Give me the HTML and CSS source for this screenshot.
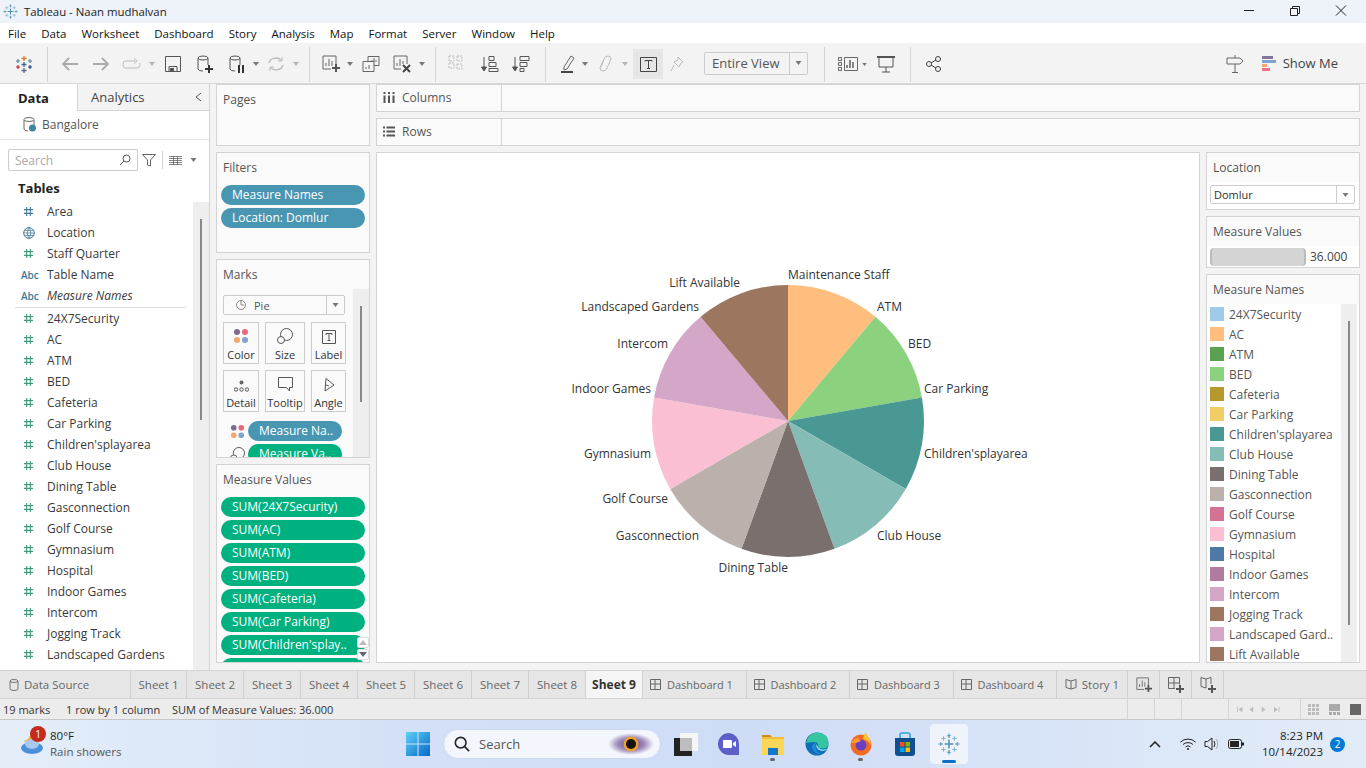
FILE: index.html
```html
<!DOCTYPE html>
<html lang="en">
<head>
<meta charset="utf-8">
<title>Tableau - Naan mudhalvan</title>
<link rel="stylesheet" href="styles.css">
</head>
<body>
<svg class="defs" width="0" height="0" aria-hidden="true">
  <symbol id="hash" viewBox="0 0 12 12"><path d="M4 1v10M8 1v10M1 4h10M1 8h10" fill="none" stroke="currentColor" stroke-width="1.2"/></symbol>
  <symbol id="caret" viewBox="0 0 6 4"><path d="M0 0h6L3 4z" fill="#777"/></symbol>
  <symbol id="sheetadd" viewBox="0 0 18 18"><path d="M1 1h13v8M9 14H1V1" fill="none" stroke="#666"/><path d="M4 11V8M7 11V4M10 11V6" stroke="#666"/><path d="M14 9v8M10 13h8" stroke="#555" stroke-width="2"/></symbol>
  <symbol id="snow" viewBox="0 0 20 20"><path d="M10 6v8M6 10h8" stroke="#4d93b8" stroke-width="1.400"/><path d="M10 .5v4M8.300 2.500h3.400M10 15.500v4M8.300 17.500h3.400M.5 10h4M2.500 8.300v3.400M15.500 10h4M17.500 8.300v3.400" stroke="#4d93b8"/><path d="M5 3v4M3 5h4M15 3v4M13 5h4M5 13v4M3 15h4M15 13v4M13 15h4" stroke="#8ab6cf"/></symbol>
</svg>
<div class="app">
  <header class="titlebar">
    <svg class="applogo" width="15" height="15"><use href="#snow"/></svg>
    <span class="apptitle">Tableau - Naan mudhalvan</span>
    <div class="winctl">
      <svg width="46" height="23" viewBox="0 0 46 23"><path d="M18 10.500h10" stroke="#222"/></svg>
      <svg width="46" height="23" viewBox="0 0 46 23"><path d="M18.500 8.500h7v7h-7zM20.500 8V6.500h7v7H26" fill="none" stroke="#222"/></svg>
      <svg width="46" height="23" viewBox="0 0 46 23"><path d="M18 5.500l10 10M28 5.500l-10 10" stroke="#222"/></svg>
    </div>
  </header>
  <nav class="menubar">
    <span>File</span><span>Data</span><span>Worksheet</span><span>Dashboard</span><span>Story</span><span>Analysis</span><span>Map</span><span>Format</span><span>Server</span><span>Window</span><span>Help</span>
  </nav>
  <div class="toolbar">
    <div class="tb w47"><svg width="20" height="20" viewBox="0 0 20 20"><path d="M10 2v5M7.500 4.500h5" stroke="#e8762b" stroke-width="1.300"/><path d="M4 5v4M2 7h4M16 5v4M14 7h4" stroke="#5b879b" stroke-width="1.200"/><path d="M10 8v5M7.500 10.500h5" stroke="#3b6e8f" stroke-width="1.300"/><path d="M4 11v4M2 13h4" stroke="#c72037" stroke-width="1.200"/><path d="M16 11v4M14 13h4" stroke="#1f457a" stroke-width="1.200"/><path d="M10 14v5M7.500 16.500h5" stroke="#5c6692" stroke-width="1.300"/></svg></div>
    <i class="sep"></i>
    <div class="tb w30 ml7"><svg width="18" height="16" viewBox="0 0 18 16"><path d="M17 8H2M8 2L2 8l6 6" fill="none" stroke="#aaa" stroke-width="1.800"/></svg></div>
    <div class="tb w32"><svg width="18" height="16" viewBox="0 0 18 16"><path d="M1 8h15M10 2l6 6-6 6" fill="none" stroke="#aaa" stroke-width="1.800"/></svg></div>
    <div class="tb w30"><svg width="20" height="12" viewBox="0 0 20 12"><path d="M13 3H3Q1 3 1 6.500T3 10h12q3 0 3-3.500V5M12 .5L15 3l-3 2.500" fill="none" stroke="#bbb"/></svg></div>
    <div class="tb w10"><svg width="6" height="4"><use href="#caret" opacity=".5"/></svg></div>
    <div class="tb w32"><svg width="16" height="16" viewBox="0 0 16 16"><path d="M.5.500h15v15H.5zM4 15.500v-5h8v5" fill="none" stroke="#555"/><path d="M5 12h4v3H5z" fill="#555"/></svg></div>
    <div class="tb w32"><svg width="18" height="18" viewBox="0 0 18 18"><ellipse cx="7" cy="3" rx="5" ry="2" fill="none" stroke="#555"/><path d="M2 3v11q0 2 5 2M12 3v7" fill="none" stroke="#555"/><path d="M13 10v8M9 14h8" stroke="#333" stroke-width="2"/></svg></div>
    <div class="tb w32"><svg width="18" height="18" viewBox="0 0 18 18"><ellipse cx="7" cy="3" rx="5" ry="2" fill="none" stroke="#555"/><path d="M2 3v11q0 2 5 2M12 3v7" fill="none" stroke="#555"/><path d="M10 10h2v8h-2zM14 10h2v8h-2z" fill="#333"/></svg></div>
    <div class="tb w6"><svg width="6" height="4"><use href="#caret"/></svg></div>
    <div class="tb w34"><svg width="18" height="16" viewBox="0 0 18 16"><path d="M2 7a7 6 0 0 1 12-3M16 9a7 6 0 0 1-12 3" fill="none" stroke="#bbb" stroke-width="1.400"/><path d="M15 1v4h-4M3 15v-4h4" fill="none" stroke="#bbb"/></svg></div>
    <div class="tb w6"><svg width="6" height="4"><use href="#caret" opacity=".5"/></svg></div>
    <i class="sep ml10"></i>
    <div class="tb w30 ml6"><svg width="18" height="18"><use href="#sheetadd"/></svg></div>
    <div class="tb w8"><svg width="6" height="4"><use href="#caret"/></svg></div>
    <div class="tb w34"><svg width="18" height="16" viewBox="0 0 18 16"><path d="M6 5V.5h11v9h-5M1 5.500h11v10H1z" fill="#f3f3f3" stroke="#666"/><path d="M10 5V4M12 6V2M14 6V4M4 13v-2M7 13V9" stroke="#666"/></svg></div>
    <div class="tb w28"><svg width="18" height="18" viewBox="0 0 18 18"><path d="M1 1h13v8M8 14H1V1" fill="none" stroke="#666"/><path d="M4 11V8M7 11V4M10 9V6" stroke="#666"/><path d="M10 10l7 7M17 10l-7 7" stroke="#444" stroke-width="2"/></svg></div>
    <div class="tb w12"><svg width="6" height="4"><use href="#caret"/></svg></div>
    <i class="sep ml7"></i>
    <div class="tb w42"><svg width="18" height="18" viewBox="0 0 18 18"><path d="M1 1h5v5H1zM1 8h5v5H1zM9 1h5v5H9zM9 9h5v5H9z" fill="none" stroke="#bbb" stroke-dasharray="2 1"/></svg></div>
    <div class="tb w24"><svg width="18" height="16" viewBox="0 0 18 16"><path d="M3 1v13M.5 11L3 15l2.500-4z" fill="#555" stroke="#555"/><path d="M8 .5h5v4H8zM8 6.500h7v4H8zM8 12.500h9v3H8z" fill="none" stroke="#555"/></svg></div>
    <div class="tb w38"><svg width="18" height="16" viewBox="0 0 18 16"><path d="M3 1v13M.5 11L3 15l2.500-4z" fill="#555" stroke="#555"/><path d="M8 .5h9v4H8zM8 6.500h7v4H8zM8 12.500h4v3H8z" fill="none" stroke="#555"/></svg></div>
    <i class="sep ml5"></i>
    <div class="tb w28 ml8"><svg width="14" height="18" viewBox="0 0 14 18"><path d="M3 12L10 1l3 2-7 11-3 1z" fill="none" stroke="#666"/><path d="M0 17h12" stroke="#444" stroke-width="2"/></svg></div>
    <div class="tb w6"><svg width="6" height="4"><use href="#caret"/></svg></div>
    <div class="tb w34"><svg width="14" height="18" viewBox="0 0 14 18"><path d="M5 6l-3 7q0 3 3 3t4-3l4-9q0-3-3-3T6 4l-3 8" fill="none" stroke="#bbb"/></svg></div>
    <div class="tb w6"><svg width="6" height="4"><use href="#caret" opacity=".5"/></svg></div>
    <div class="tb w30 ml5 tb-on"><svg width="17" height="15" viewBox="0 0 17 15"><path d="M.5.500h16v14H.5z" fill="none" stroke="#444"/><path d="M5 4.500V3.500h7v1M8.500 3.500v8M7 11.500h3" fill="none" stroke="#444"/></svg></div>
    <div class="tb w28"><svg width="14" height="16" viewBox="0 0 14 16"><path d="M8 1l5 5-2 1-2 4-5-5 4-2zM4 9l-3 6" fill="none" stroke="#bbb"/></svg></div>
    <div class="viewsel"><span class="viewtext">Entire View</span><span class="viewcaret"><svg width="7" height="4"><use href="#caret"/></svg></span></div>
    <i class="sep ml16"></i>
    <div class="tb w28 ml9"><svg width="20" height="14" viewBox="0 0 20 14"><path d="M.5.500h3v3h-3zM.5 5.500h3v3h-3zM.5 10.500h3v3h-3zM6.500.5h13v13h-13z" fill="none" stroke="#666"/><path d="M9 11V8M12 11V3M15 11V5" stroke="#555" stroke-width="1.400"/></svg></div>
    <div class="tb w4"><svg width="5" height="3"><use href="#caret"/></svg></div>
    <div class="tb w40"><svg width="18" height="17" viewBox="0 0 18 17"><path d="M0 1h18" stroke="#555" stroke-width="2"/><path d="M2 1v10h14V1M9 11v5M5 16h8" fill="none" stroke="#555"/></svg></div>
    <i class="sep ml4"></i>
    <div class="tb w44"><svg width="15" height="16" viewBox="0 0 15 16"><circle cx="3" cy="8" r="2.500" fill="none" stroke="#444"/><circle cx="12" cy="3" r="2.500" fill="none" stroke="#444"/><circle cx="12" cy="13" r="2.500" fill="none" stroke="#444"/><path d="M5 7l5-3M5 9l5 3" stroke="#444"/></svg></div>
    <div class="tb w30 push"><svg width="18" height="18" viewBox="0 0 18 18"><path d="M9 0v3M1 3h13l3 3-3 3H1zM9 9v8M6 17.500h6" fill="none" stroke="#666"/></svg></div>
    <div class="showme"><svg width="15" height="16" viewBox="0 0 15 16"><path d="M0 1h11v3H0z" fill="#86749c"/><path d="M0 5h14v3H0z" fill="#7fa3cc"/><path d="M0 9h5v3H0z" fill="#f3a66e"/><path d="M0 13h8v3H0z" fill="#f2707d"/></svg><span>Show Me</span></div>
  </div>
  <main class="main">
    <aside class="datapane">
      <div class="panetabs"><span class="ptab active">Data</span><span class="ptab">Analytics</span><span class="collapse"><svg width="7" height="10" viewBox="0 0 7 10"><path d="M6 1L1 5l5 4" fill="none" stroke="#555"/></svg></span></div>
      <div class="source"><svg width="13" height="15" viewBox="0 0 13 15"><ellipse cx="6" cy="2.500" rx="5" ry="2" fill="none" stroke="#666"/><path d="M1 3v9q0 2 4 2M11 3v5" fill="none" stroke="#666"/><circle cx="9.500" cy="11" r="3.500" fill="#3f84a8"/></svg><span>Bangalore</span></div>
      <div class="searchrow">
        <div class="search"><span>Search</span><svg width="12" height="12" viewBox="0 0 12 12"><circle cx="7.500" cy="4.500" r="3.500" fill="none" stroke="#555"/><path d="M5 7l-4 4" stroke="#555"/></svg></div>
        <svg class="filt" width="14" height="13" viewBox="0 0 14 13"><path d="M.5.500h13L8.500 6v6l-3-1V6z" fill="none" stroke="#666"/></svg>
        <i class="vr"></i>
        <svg width="13" height="9" viewBox="0 0 13 9"><path d="M0 .5h13M0 2.500h13M0 4.500h13M0 6.500h13M0 8.500h13M4.500 0v9M8.500 0v9" fill="none" stroke="#666" stroke-width=".8"/></svg>
        <svg class="cr" width="7" height="4"><use href="#caret"/></svg>
      </div>
      <div class="tables">Tables</div>
      <div class="fieldwrap">
        <div class="fields">
          <div class="field blue"><svg class="ic" width="11" height="11"><use href="#hash"/></svg><span>Area</span></div>
          <div class="field blue"><svg class="ic globe" width="12" height="12" viewBox="0 0 12 12"><circle cx="6" cy="6" r="5.300" fill="none" stroke="currentColor"/><path d="M.7 6h10.600M1.500 3.500h9M1.500 8.500h9M6 .7Q2.500 6 6 11.300Q9.500 6 6 .7" fill="none" stroke="currentColor" stroke-width=".7"/></svg><span>Location</span></div>
          <div class="field green"><svg class="ic" width="11" height="11"><use href="#hash"/></svg><span>Staff Quarter</span></div>
          <div class="field blue"><b class="abc">Abc</b><span>Table Name</span></div>
          <div class="field blue ital"><b class="abc">Abc</b><span>Measure Names</span></div>
          <div class="divider"></div>
          <div class="field green"><svg class="ic" width="11" height="11"><use href="#hash"/></svg><span>24X7Security</span></div>
          <div class="field green"><svg class="ic" width="11" height="11"><use href="#hash"/></svg><span>AC</span></div>
          <div class="field green"><svg class="ic" width="11" height="11"><use href="#hash"/></svg><span>ATM</span></div>
          <div class="field green"><svg class="ic" width="11" height="11"><use href="#hash"/></svg><span>BED</span></div>
          <div class="field green"><svg class="ic" width="11" height="11"><use href="#hash"/></svg><span>Cafeteria</span></div>
          <div class="field green"><svg class="ic" width="11" height="11"><use href="#hash"/></svg><span>Car Parking</span></div>
          <div class="field green"><svg class="ic" width="11" height="11"><use href="#hash"/></svg><span>Children'splayarea</span></div>
          <div class="field green"><svg class="ic" width="11" height="11"><use href="#hash"/></svg><span>Club House</span></div>
          <div class="field green"><svg class="ic" width="11" height="11"><use href="#hash"/></svg><span>Dining Table</span></div>
          <div class="field green"><svg class="ic" width="11" height="11"><use href="#hash"/></svg><span>Gasconnection</span></div>
          <div class="field green"><svg class="ic" width="11" height="11"><use href="#hash"/></svg><span>Golf Course</span></div>
          <div class="field green"><svg class="ic" width="11" height="11"><use href="#hash"/></svg><span>Gymnasium</span></div>
          <div class="field green"><svg class="ic" width="11" height="11"><use href="#hash"/></svg><span>Hospital</span></div>
          <div class="field green"><svg class="ic" width="11" height="11"><use href="#hash"/></svg><span>Indoor Games</span></div>
          <div class="field green"><svg class="ic" width="11" height="11"><use href="#hash"/></svg><span>Intercom</span></div>
          <div class="field green"><svg class="ic" width="11" height="11"><use href="#hash"/></svg><span>Jogging Track</span></div>
          <div class="field green"><svg class="ic" width="11" height="11"><use href="#hash"/></svg><span>Landscaped Gardens</span></div>
        </div>
        <div class="vscroll fieldscroll"><i></i></div>
      </div>
    </aside>
    <section class="cards">
      <div class="card pages"><div class="cardtitle">Pages</div></div>
      <div class="card filters"><div class="cardtitle">Filters</div>
        <div class="pills"><div class="pill teal">Measure Names</div><div class="pill teal">Location: Domlur</div></div>
      </div>
      <div class="card marks"><div class="cardtitle">Marks</div>
        <div class="marksbody">
          <div class="marktype"><span class="mt-label"><svg width="10" height="10" viewBox="0 0 10 10"><circle cx="5" cy="5" r="4.500" fill="none" stroke="#888"/><path d="M5 1v4h3" fill="none" stroke="#888"/></svg>Pie</span><span class="mt-caret"><svg width="7" height="4"><use href="#caret"/></svg></span></div>
          <div class="markgrid">
            <div class="mbtn"><svg width="16" height="16" viewBox="0 0 16 16"><circle cx="4" cy="4" r="3" fill="#7d6b8f"/><circle cx="12" cy="4" r="3" fill="#e8697d"/><circle cx="4" cy="12" r="3" fill="#f3a66e"/><circle cx="12" cy="12" r="3" fill="#7fa3cc"/></svg><span>Color</span></div>
            <div class="mbtn"><svg width="16" height="16" viewBox="0 0 16 16"><circle cx="9.500" cy="6.500" r="6" fill="none" stroke="#555"/><circle cx="4" cy="12" r="3.500" fill="#fafafa" stroke="#555"/></svg><span>Size</span></div>
            <div class="mbtn"><svg width="14" height="14" viewBox="0 0 14 14"><path d="M.5.500h13v13H.5z" fill="none" stroke="#555"/><path d="M4 5V3.500h6V5M7 3.500v7M5.500 10.500h3" fill="none" stroke="#555"/></svg><span>Label</span></div>
            <div class="mbtn"><svg width="15" height="12" viewBox="0 0 15 12"><circle cx="7.500" cy="2.500" r="2" fill="#666"/><circle cx="2" cy="9.500" r="1.700" fill="none" stroke="#555"/><circle cx="7.500" cy="9.500" r="1.700" fill="none" stroke="#555"/><circle cx="13" cy="9.500" r="1.700" fill="none" stroke="#555"/></svg><span>Detail</span></div>
            <div class="mbtn"><svg width="15" height="15" viewBox="0 0 15 15"><path d="M.5.500h14v10h-3v3.500l-3-3.500H.5z" fill="none" stroke="#555"/></svg><span>Tooltip</span></div>
            <div class="mbtn"><svg width="12" height="14" viewBox="0 0 12 14"><path d="M3 .5L11 7l-9 6zM3 7l3 1" fill="none" stroke="#555"/></svg><span>Angle</span></div>
          </div>
          <div class="markpill"><svg width="15" height="15" viewBox="0 0 16 16"><circle cx="4" cy="4" r="3" fill="#7d6b8f"/><circle cx="12" cy="4" r="3" fill="#e8697d"/><circle cx="4" cy="12" r="3" fill="#f3a66e"/><circle cx="12" cy="12" r="3" fill="#7fa3cc"/></svg><div class="pill teal">Measure Na..</div></div>
          <div class="markpill"><svg width="15" height="15" viewBox="0 0 16 16"><circle cx="9.500" cy="6.500" r="6" fill="none" stroke="#555"/><circle cx="4" cy="12" r="3.500" fill="#fafafa" stroke="#555"/></svg><div class="pill mint">Measure Va..</div></div>
        </div>
        <div class="vscroll markscroll"><i></i></div>
      </div>
      <div class="card mvalues"><div class="cardtitle">Measure Values</div>
        <div class="pills tight">
          <div class="pill mint">SUM(24X7Security)</div>
          <div class="pill mint">SUM(AC)</div>
          <div class="pill mint">SUM(ATM)</div>
          <div class="pill mint">SUM(BED)</div>
          <div class="pill mint">SUM(Cafeteria)</div>
          <div class="pill mint">SUM(Car Parking)</div>
          <div class="pill mint">SUM(Children'splay..</div>
          <div class="pill mint"></div>
        </div>
        <div class="spin"><span><svg width="8" height="5" viewBox="0 0 8 5"><path d="M0 5l4-5 4 5z" fill="#bbb"/></svg></span><span><svg width="8" height="5" viewBox="0 0 8 5"><path d="M0 0l4 5 4-5z" fill="#667"/></svg></span></div>
      </div>
    </section>
    <section class="work">
      <div class="shelf"><div class="shelfhead"><svg width="12" height="11" viewBox="0 0 12 11"><path d="M1.500 0v2M6 0v2M10.500 0v2M1.500 3.500V11M6 3.500V11M10.500 3.500V11" stroke="#555" stroke-width="2"/></svg><span>Columns</span></div></div>
      <div class="shelf"><div class="shelfhead"><svg width="12" height="11" viewBox="0 0 12 11"><path d="M0 1.500h2M3.500 1.500H12M0 5.500h2M3.500 5.500H12M0 9.500h2M3.500 9.500H12" stroke="#555" stroke-width="2"/></svg><span>Rows</span></div></div>
      <div class="stage">
        <div class="canvas">
          <svg class="pie" width="822" height="509" viewBox="377 153 822 509">
            <path d="M788 421L788 285A136 136 0 0 1 875.420 316.820Z" fill="#ffbe7d"/>
            <path d="M788 421L875.420 316.820A136 136 0 0 1 921.930 397.380Z" fill="#8cd17d"/>
            <path d="M788 421L921.930 397.380A136 136 0 0 1 905.780 489Z" fill="#499894"/>
            <path d="M788 421L905.780 489A136 136 0 0 1 834.510 548.800Z" fill="#86bcb6"/>
            <path d="M788 421L834.510 548.800A136 136 0 0 1 741.490 548.800Z" fill="#79706e"/>
            <path d="M788 421L741.490 548.800A136 136 0 0 1 670.220 489Z" fill="#bab0ac"/>
            <path d="M788 421L670.220 489A136 136 0 0 1 654.070 397.380Z" fill="#fabfd2"/>
            <path d="M788 421L654.070 397.380A136 136 0 0 1 700.580 316.820Z" fill="#d4a6c8"/>
            <path d="M788 421L700.580 316.820A136 136 0 0 1 788 285Z" fill="#9d7660"/>
            <g class="lbl">
              <text x="788" y="279">Maintenance Staff</text>
              <text x="877" y="311">ATM</text>
              <text x="908" y="348">BED</text>
              <text x="924" y="393">Car Parking</text>
              <text x="924" y="458">Children'splayarea</text>
              <text x="877" y="540">Club House</text>
            </g>
            <g class="lbl end">
              <text x="788" y="572">Dining Table</text>
              <text x="699" y="540">Gasconnection</text>
              <text x="668" y="503">Golf Course</text>
              <text x="651" y="458">Gymnasium</text>
              <text x="651" y="393">Indoor Games</text>
              <text x="668" y="348">Intercom</text>
              <text x="699" y="311">Landscaped Gardens</text>
              <text x="740" y="287">Lift Available</text>
            </g>
          </svg>
        </div>
        <aside class="legends">
          <div class="card loc"><div class="cardtitle">Location</div>
            <div class="strip"><div class="dropdown"><span>Domlur</span><span class="dd-caret"><svg width="7" height="4"><use href="#caret"/></svg></span></div></div>
          </div>
          <div class="card slider"><div class="cardtitle">Measure Values</div>
            <div class="strip sliderrow"><i class="sliderbar"></i><span>36.000</span></div>
          </div>
          <div class="card names"><div class="cardtitle">Measure Names</div>
            <div class="legendbody">
              <div class="legend">
                <div class="lg"><i class="c1"></i>24X7Security</div>
                <div class="lg"><i class="c2"></i>AC</div>
                <div class="lg"><i class="c3"></i>ATM</div>
                <div class="lg"><i class="c4"></i>BED</div>
                <div class="lg"><i class="c5"></i>Cafeteria</div>
                <div class="lg"><i class="c6"></i>Car Parking</div>
                <div class="lg"><i class="c7"></i>Children'splayarea</div>
                <div class="lg"><i class="c8"></i>Club House</div>
                <div class="lg"><i class="c9"></i>Dining Table</div>
                <div class="lg"><i class="c10"></i>Gasconnection</div>
                <div class="lg"><i class="c11"></i>Golf Course</div>
                <div class="lg"><i class="c12"></i>Gymnasium</div>
                <div class="lg"><i class="c13"></i>Hospital</div>
                <div class="lg"><i class="c14"></i>Indoor Games</div>
                <div class="lg"><i class="c15"></i>Intercom</div>
                <div class="lg"><i class="c16"></i>Jogging Track</div>
                <div class="lg"><i class="c15"></i>Landscaped Gard..</div>
                <div class="lg"><i class="c16"></i>Lift Available</div>
              </div>
              <div class="vscroll legendscroll"><i></i></div>
            </div>
          </div>
        </aside>
      </div>
    </section>
  </main>
  <div class="tabs">
    <div class="tab ds"><svg width="10" height="12" viewBox="0 0 10 12"><ellipse cx="5" cy="2" rx="4" ry="1.500" fill="none" stroke="#777"/><path d="M1 2v8q0 1.500 4 1.500T9 10V2" fill="none" stroke="#777"/></svg>Data Source</div>
    <div class="tab sheet">Sheet 1</div><div class="tab sheet">Sheet 2</div><div class="tab sheet">Sheet 3</div><div class="tab sheet">Sheet 4</div><div class="tab sheet">Sheet 5</div><div class="tab sheet">Sheet 6</div><div class="tab sheet">Sheet 7</div><div class="tab sheet">Sheet 8</div>
    <div class="tab sheet current">Sheet 9</div>
    <div class="tab dash"><svg width="11" height="11" viewBox="0 0 11 11"><path d="M.5.500h10v10H.5zM.5 5h10M5 .5v10" fill="none" stroke="#666"/></svg>Dashboard 1</div>
    <div class="tab dash"><svg width="11" height="11" viewBox="0 0 11 11"><path d="M.5.500h10v10H.5zM.5 5h10M5 .5v10" fill="none" stroke="#666"/></svg>Dashboard 2</div>
    <div class="tab dash"><svg width="11" height="11" viewBox="0 0 11 11"><path d="M.5.500h10v10H.5zM.5 5h10M5 .5v10" fill="none" stroke="#666"/></svg>Dashboard 3</div>
    <div class="tab dash"><svg width="11" height="11" viewBox="0 0 11 11"><path d="M.5.500h10v10H.5zM.5 5h10M5 .5v10" fill="none" stroke="#666"/></svg>Dashboard 4</div>
    <div class="tab story"><svg width="12" height="11" viewBox="0 0 12 11"><path d="M6 2L1 .5v8L6 10l5-1.500v-8zM6 2v8" fill="none" stroke="#666"/></svg>Story 1</div>
    <div class="tab add"><svg width="16" height="16" viewBox="0 0 18 18"><use href="#sheetadd"/></svg></div>
    <div class="tab add"><svg width="16" height="16" viewBox="0 0 16 16"><path d="M.5.500h11v7M7 11.500H.5v-11M.5 6h11M6 .5v11" fill="none" stroke="#666"/><path d="M12 8v8M8 12h8" stroke="#555" stroke-width="2"/></svg></div>
    <div class="tab add"><svg width="16" height="16" viewBox="0 0 16 16"><path d="M6 2L1 .5v9l5 1.500M6 2l5-1.500V7M6 2v9" fill="none" stroke="#666"/><path d="M12 8v8M8 12h8" stroke="#555" stroke-width="2"/></svg></div>
  </div>
  <div class="status">
    <span class="st1">19 marks</span><span class="st2">1 row by 1 column</span><span class="st3">SUM of Measure Values: 36.000</span>
    <i class="cell"></i><i class="cell"></i><i class="cell wide"></i>
    <div class="cell pager">
      <svg width="54" height="9" viewBox="0 0 70 9"><path d="M0 1v7h1V1zM7 1L2 4.500 7 8zM21 1l-5 3.500L21 8zM32 1l5 3.500L32 8zM48 1l5 3.500L48 8zM54 1v7h1V1z" fill="#bbb"/></svg>
    </div>
    <div class="views">
      <svg width="11" height="11" viewBox="0 0 11 11"><path d="M0 0h3v3H0zM4 0h3v3H4zM8 0h3v3H8zM0 4h3v3H0zM4 4h3v3H4zM8 4h3v3H8zM0 8h3v3H0zM4 8h3v3H4zM8 8h3v3H8z" fill="#bbb"/></svg>
      <svg width="11" height="11" viewBox="0 0 11 11"><path d="M0 0h11v7H0zM0 8h3v3H0zM4 8h3v3H4zM8 8h3v3H8z" fill="#aaa"/></svg>
      <svg width="11" height="11" viewBox="0 0 11 11"><path d="M0 0h11v11H0z" fill="#666"/></svg>
    </div>
  </div>
  <footer class="taskbar">
    <div class="weather">
      <svg width="26" height="26" viewBox="0 0 26 26"><path d="M4 10q6 0 8-8 5 6 0 10z" fill="#f5a623"/><ellipse cx="13" cy="17" rx="11" ry="6" fill="#4a90d9"/><ellipse cx="13" cy="13" rx="7" ry="5" fill="#a9c8ee"/></svg>
      <b class="badge">1</b>
      <div class="wtext"><span>80°F</span><span class="dim">Rain showers</span></div>
    </div>
    <div class="tbcenter">
      <svg class="start" width="24" height="24" viewBox="0 0 24 24"><defs><linearGradient id="w" x1="0" y1="0" x2="1" y2="1"><stop offset="0" stop-color="#5fd0f5"/><stop offset="1" stop-color="#0669c9"/></linearGradient></defs><path d="M0 0h11.500v11.500H0zM12.500 0H24v11.500H12.500zM0 12.500h11.500V24H0zM12.500 12.500H24V24H12.500z" fill="url(#w)"/></svg>
      <div class="tsearch"><svg width="16" height="16" viewBox="0 0 18 18"><circle cx="7.500" cy="7.500" r="6" fill="none" stroke="#222" stroke-width="1.800"/><path d="M12 12l5 5" stroke="#222" stroke-width="1.800"/></svg><span>Search</span>
        <svg class="eye" width="46" height="24" viewBox="0 0 46 24"><defs><radialGradient id="haze"><stop offset="0" stop-color="#5b3d78"/><stop offset=".6" stop-color="#a48fc0"/><stop offset="1" stop-color="#f3f7fd"/></radialGradient></defs><ellipse cx="23" cy="12" rx="23" ry="11" fill="url(#haze)"/><circle cx="23" cy="12" r="7.500" fill="#e8a32e"/><circle cx="23" cy="12" r="5" fill="#17100c"/></svg>
      </div>
      <svg class="ti tv" width="24" height="24" viewBox="0 0 24 24"><path d="M6 1h18v18H6z" fill="#f6f6f6"/><path d="M6 6h12v13H6z" fill="#bdbdbd"/><path d="M0 6h6v13h12v5H0z" fill="#222"/></svg>
      <svg class="ti" width="24" height="24" viewBox="0 0 24 24"><path d="M12 1a11 11 0 1 0 0 22h10V12A11 11 0 0 0 12 1z" fill="#5b5fc7"/><path d="M6 8h8a1 1 0 0 1 1 1v6a1 1 0 0 1-1 1H6zM16 11l3-2v6l-3-2z" fill="#fff"/></svg>
      <div class="ti-wrap"><svg width="24" height="24" viewBox="0 0 24 24"><path d="M1 3h8l2 2h12v18H1z" fill="#f6bd3a"/><path d="M1 3h8l2 2H1z" fill="#c98d1e"/><path d="M1 7h22v16H1z" fill="#fcd659"/><path d="M7 16h10v7H7z" fill="#1478c8"/></svg><i class="dot"></i></div>
      <svg class="ti" width="24" height="24" viewBox="0 0 24 24"><circle cx="12" cy="12" r="11.500" fill="#0f6db5"/><path d="M1 11Q3 .5 13 .5q10 .5 10.500 11 0 5-5.500 5-5 0-5-3.500 0-3-4-3-4 0-8.500 1z" fill="#35c6a0"/><path d="M11 10q-6 3-3 8 3 5 9 4-8-1-6-12z" fill="#1e8ad6"/><path d="M11 12q0 6 6 7 4 0 6-3-3 2-6 1.500T11 12z" fill="#8fdcf2"/></svg>
      <div class="ti-wrap"><svg width="24" height="24" viewBox="0 0 24 24"><circle cx="12" cy="13" r="10.500" fill="#f26b25"/><path d="M16 0q5 6 6 13-3-5-8-6z" fill="#ffc32f"/><circle cx="12" cy="13" r="5.500" fill="#6b3fc2"/><path d="M2 11q3-5 7-5l3 3-5 2z" fill="#ff9a2b"/></svg><i class="dot"></i></div>
      <svg class="ti" width="24" height="24" viewBox="0 0 24 24"><path d="M2 6h20v15a3 3 0 0 1-3 3H5a3 3 0 0 1-3-3z" fill="#10508f"/><path d="M7 6V3a2 2 0 0 1 2-2h6a2 2 0 0 1 2 2v3" fill="none" stroke="#2aa6df" stroke-width="1.600"/><path d="M7 10h4.500v4.500H7z" fill="#f25022"/><path d="M12.500 10H17v4.500h-4.500z" fill="#7fba00"/><path d="M7 15.500h4.500V20H7z" fill="#00a4ef"/><path d="M12.500 15.500H17V20h-4.500z" fill="#ffb900"/></svg>
      <div class="ti-active"><svg width="22" height="22"><use href="#snow"/></svg><i class="bar"></i></div>
    </div>
    <div class="tray">
      <svg width="12" height="7" viewBox="0 0 12 7"><path d="M1 6l5-5 5 5" fill="none" stroke="#222" stroke-width="1.500"/></svg>
      <svg class="wifi" width="16" height="12" viewBox="0 0 16 12"><path d="M.5 4a11 11 0 0 1 15 0M3 6.500a7.500 7.500 0 0 1 10 0M5.500 9a3.500 3.500 0 0 1 5 0" fill="none" stroke="#222"/><circle cx="8" cy="11" r="1" fill="#222"/></svg>
      <svg class="vol" width="16" height="14" viewBox="0 0 16 14"><path d="M1 4.500h2.500L8 1v12L3.500 9.500H1z" fill="none" stroke="#222"/><path d="M10 4q2 3 0 6" fill="none" stroke="#222"/><path d="M12 2q3.500 5 0 10" fill="none" stroke="#aaa"/></svg>
      <svg class="bat" width="16" height="10" viewBox="0 0 16 10"><rect x=".5" y=".5" width="13" height="9" rx="2" fill="none" stroke="#222"/><rect x="2" y="2" width="9" height="6" fill="#222"/><rect x="14" y="3.500" width="2" height="3" fill="#222"/></svg>
      <div class="clock"><span>8:23 PM</span><span>10/14/2023</span></div>
      <b class="notif">2</b>
    </div>
  </footer>
</div>
</body>
</html>
```

FILE: styles.css
```css
* { box-sizing: border-box; }
html, body { margin: 0; padding: 0; }
body { width: 1366px; height: 768px; overflow: hidden; font-family: "Open Sans", "Liberation Sans", sans-serif; font-size: 12px; color: #333; background: #f3f3f3; }
.defs { position: absolute; }
svg { display: block; flex: none; }
i { display: block; font-style: normal; }
.app { display: flex; flex-direction: column; height: 768px; }

.titlebar { height: 23px; background: #eef2f9; display: flex; align-items: center; padding-left: 3px; }
.apptitle { margin-left: 6px; font-size: 11.400px; color: #222; }
.winctl { margin-left: auto; display: flex; padding-right: 2px; }

.menubar { height: 20px; background: #fff; display: flex; align-items: center; padding-left: 8px; gap: 15px; color: #111; font-size: 11.500px; }

.toolbar { height: 41px; background: #f3f3f3; display: flex; align-items: center; border-bottom: 1px solid #d8d8d8; }
.tb { display: flex; align-items: center; justify-content: center; height: 30px; margin-top: 2px; }
.sep { width: 1px; height: 35px; margin-top: 2px; background: #d4d4d4; flex: none; }
.w4 { width: 4px; } .w6 { width: 6px; } .w8 { width: 8px; } .w10 { width: 10px; } .w12 { width: 12px; }
.w24 { width: 24px; } .w28 { width: 28px; } .w30 { width: 30px; } .w32 { width: 32px; } .w34 { width: 34px; }
.w38 { width: 38px; } .w40 { width: 40px; } .w42 { width: 42px; } .w44 { width: 44px; } .w47 { width: 47px; }
.ml4 { margin-left: 4px; } .ml5 { margin-left: 5px; } .ml6 { margin-left: 6px; } .ml7 { margin-left: 7px; }
.ml8 { margin-left: 8px; } .ml9 { margin-left: 9px; } .ml10 { margin-left: 10px; } .ml16 { margin-left: 16px; }
.tb-on { background: #e6e6e6; }
.push { margin-left: auto; }
.viewsel { margin-left: 13px; width: 104px; height: 23px; border: 1px solid #ccc; border-radius: 2px; display: flex; align-items: center; color: #555; font-size: 13px; }
.viewtext { flex: 1; padding-left: 7px; }
.viewcaret { width: 18px; height: 21px; border-left: 1px solid #ccc; display: flex; align-items: center; justify-content: center; }
.showme { margin-left: 12px; padding-right: 28px; display: flex; align-items: center; gap: 6px; font-size: 13px; color: #444; }

.main { height: 586px; display: flex; background: #f3f3f3; overflow: hidden; }
.datapane { width: 210px; flex: none; background: #fff; border-right: 1px solid #d4d4d4; display: flex; flex-direction: column; }
.panetabs { height: 27px; display: flex; align-items: center; flex: none; font-size: 13px; }
.ptab { height: 27px; display: flex; align-items: center; background: #f3f3f3; border-bottom: 1px solid #d4d4d4; }
.ptab:nth-child(2) { width: 100px; padding-left: 13px; color: #444; border-left: 1px solid #d4d4d4; }
.ptab.active { width: 77px; padding-left: 18px; background: #fff; border-bottom: 0; font-weight: 700; color: #222; }
.collapse { flex: 1; height: 27px; display: flex; align-items: center; justify-content: flex-end; padding-right: 7px; background: #f3f3f3; border-bottom: 1px solid #d4d4d4; }
.source { height: 29px; display: flex; align-items: center; gap: 6px; padding: 0 0 2px 23px; color: #555; border-bottom: 1px solid #e4e4e4; flex: none; }
.searchrow { height: 38px; flex: none; display: flex; align-items: center; padding: 2px 0 0 8px; }
.search { width: 130px; height: 22px; border: 1px solid #ccc; border-radius: 2px; display: flex; align-items: center; justify-content: space-between; padding: 0 6px; color: #aaa; }
.filt { margin-left: 4px; }
.vr { width: 1px; height: 18px; background: #d4d4d4; margin: 0 6px; }
.cr { margin-left: 8px; }
.tables { height: 20px; flex: none; padding-left: 18px; font-weight: 700; font-size: 13px; color: #222; line-height: 20px; }
.fieldwrap { flex: 1; display: flex; overflow: hidden; min-height: 0; margin-top: 3px; }
.fields { flex: 1; min-width: 0; }
.field { height: 21px; display: flex; align-items: center; padding-left: 23px; white-space: nowrap; }
.field > span { color: #3a3a3a; }
.field .ic { margin-right: 13px; }
.field.blue .ic { color: #3d7a96; }
.field.blue .globe { margin-right: 12px; }
.field.green .ic { color: #3f9a7c; }
.abc { width: 26px; margin-left: -2px; font-size: 10px; font-weight: 600; color: #3d7a96; }
.ital > span { font-style: italic; }
.divider { height: 1px; margin: 1px 7px 0 15px; background: #ddd; }
.vscroll { flex: none; background: #eee; position: relative; }
.vscroll i { position: absolute; background: #888; width: 2px; left: 7px; }
.fieldscroll { width: 16px; margin-top: 1px; }
.fieldscroll i { top: 17px; height: 201px; }

.cards { width: 154px; flex: none; margin-left: 6px; display: flex; flex-direction: column; gap: 6px; }
.card { background: #fafafa; border: 1px solid #d4d4d4; overflow: hidden; position: relative; flex: none; }
.cardtitle { color: #555; padding: 7px 0 0 6px; height: 30px; line-height: 16px; font-size: 12px; }
.pages { height: 62px; }
.filters { height: 101px; }
.marks { height: 199px; }
.mvalues { height: 199px; }
.pills { display: flex; flex-direction: column; gap: 3px; padding: 2px 4px 0; }
.pill { height: 20px; border-radius: 10px; color: #fff; padding-left: 11px; line-height: 20px; white-space: nowrap; flex: none; }
.teal { background: #4996b2; }
.mint { background: #00b180; }
.marksbody { padding: 5px 0 0 6px; width: 136px; }
.marktype { width: 122px; height: 20px; border: 1px solid #ccc; border-radius: 2px; display: flex; align-items: center; color: #555; font-size: 11px; }
.mt-label { flex: 1; display: flex; align-items: center; gap: 8px; padding-left: 12px; }
.mt-caret { width: 18px; height: 18px; border-left: 1px solid #ccc; display: flex; align-items: center; justify-content: center; }
.markgrid { display: grid; grid-template-columns: 36px 40px 35px; column-gap: 6px; row-gap: 6px; margin-top: 7px; }
.mbtn { height: 42px; border: 1px solid #ccc; display: flex; flex-direction: column; align-items: center; justify-content: flex-end; font-size: 11px; color: #333; gap: 2px; padding-bottom: 1px; line-height: 15px; }
.mbtn svg { margin-bottom: 1px; }
.markpill { display: flex; align-items: center; gap: 3px; margin: 9px 0 -6px 7px; height: 20px; }
.markpill + .markpill { margin-top: 9px; }
.markpill .pill { width: 94px; }
.markscroll { position: absolute; right: 0; top: 29px; bottom: 0; width: 16px; }
.markscroll i { top: 17px; height: 96px; left: 7px; }
.spin { position: absolute; right: 0; top: 172px; width: 12px; display: flex; flex-direction: column; gap: 1px; }
.spin span { height: 11px; width: 12px; background: #fff; border: 1px solid #ddd; border-radius: 2px; display: flex; align-items: center; justify-content: center; }

.work { flex: 1; min-width: 0; margin: 0 6px; display: flex; flex-direction: column; gap: 6px; }
.shelf { height: 28px; flex: none; background: #fafafa; border: 1px solid #d4d4d4; }
.shelfhead { width: 125px; height: 26px; border-right: 1px solid #d4d4d4; display: flex; align-items: center; gap: 7px; padding: 0 0 2px 6px; color: #555; }
.stage { flex: 1; min-height: 0; display: flex; gap: 6px; padding-bottom: 7px; }
.canvas { width: 824px; flex: none; background: #fff; border: 1px solid #d4d4d4; overflow: hidden; }
.lbl text { font-family: "Open Sans", sans-serif; font-size: 12px; fill: #333; }
.lbl.end text { text-anchor: end; }
.legends { width: 154px; flex: none; display: flex; flex-direction: column; gap: 6px; }
.loc { height: 58px; }
.slider { height: 52px; }
.names { flex: 1; }
.strip { background: #fff; height: 27px; margin-top: -1px; padding: 3px; }
.dropdown { height: 19px; width: 145px; border: 1px solid #ccc; border-radius: 2px; display: flex; align-items: center; justify-content: space-between; padding-left: 3px; font-size: 11px; color: #333; }
.dd-caret { width: 18px; height: 17px; border-left: 1px solid #ccc; display: flex; align-items: center; justify-content: center; }
.sliderrow { display: flex; align-items: center; gap: 4px; height: 21px; padding: 0 3px; color: #444; }
.sliderbar { width: 96px; height: 18px; background: #d4d4d4; border-left: 2px solid #bbb; border-right: 2px solid #bbb; border-radius: 4px; }
.legendbody { display: flex; background: #fff; height: 360px; margin-top: -1px; }
.legend { flex: 1; padding: 0 0 0 3px; }
.lg { height: 20px; display: flex; align-items: center; gap: 5px; color: #555; white-space: nowrap; }
.lg i { width: 14px; height: 14px; flex: none; }
.c1 { background: #a0cbe8; } .c2 { background: #ffbe7d; } .c3 { background: #59a14f; } .c4 { background: #8cd17d; }
.c5 { background: #b6992d; } .c6 { background: #f1ce63; } .c7 { background: #499894; } .c8 { background: #86bcb6; }
.c9 { background: #79706e; } .c10 { background: #bab0ac; } .c11 { background: #d37295; } .c12 { background: #fabfd2; }
.c13 { background: #4e79a7; } .c14 { background: #b07aa1; } .c15 { background: #d4a6c8; } .c16 { background: #9d7660; }
.legendscroll { width: 16px; margin-right: 2px; }
.legendscroll i { top: 17px; height: 304px; }

.tabs { height: 29px; display: flex; background: #e6e6e6; border-top: 1px solid #d4d4d4; border-bottom: 1px solid #d4d4d4; flex: none; font-size: 11.500px; }
.tab { display: flex; align-items: center; justify-content: center; border-right: 1px solid #d0d0d0; color: #666; flex: none; gap: 5px; }
.ds { width: 131px; justify-content: flex-start; padding-left: 9px; gap: 5px; }
.sheet { width: 57px; }
.ds + .sheet { width: 56px; }
.current { background: #f5f5f5; color: #333; font-weight: 700; font-size: 12px; }
.dash { width: 103.500px; font-size: 11px; gap: 6px; justify-content: flex-start; padding-left: 7px; }
.story { width: 71px; }
.add { width: 32px; }

.status { height: 21px; display: flex; align-items: center; background: #ececec; border-bottom: 1px solid #c8c8c8; font-size: 11px; color: #333; flex: none; }
.st1 { margin-left: 3px; width: 63px; }
.st2 { width: 106px; }
.st3 { width: 955px; }
.cell { height: 20px; width: 27px; border-left: 1px solid #d4d4d4; flex: none; }
.cell.wide { width: 47px; }
.pager { width: 72px; display: flex; align-items: center; padding-left: 8px; }
.views { flex: 1; border-left: 1px solid #d4d4d4; height: 20px; display: flex; align-items: center; gap: 10px; padding-left: 7px; }

.taskbar { flex: 1; min-height: 0; display: flex; align-items: center; background: linear-gradient(90deg, #e4eef9 0%, #d3e0f7 30%, #cfdcf6 55%, #e2ecf8 100%); position: relative; }
.weather { width: 130px; flex: none; display: flex; align-items: center; padding-left: 19px; position: relative; font-size: 11.500px; }
.badge { position: absolute; left: 30px; top: -2px; width: 16px; height: 16px; border-radius: 8px; background: #c42b1c; color: #fff; font-size: 10px; font-weight: 400; text-align: center; line-height: 16px; }
.wtext { display: flex; flex-direction: column; margin-left: 5px; line-height: 16px; color: #222; }
.dim { color: #555; }
.tbcenter { display: flex; align-items: center; margin-left: 276px; }
.start { margin-right: 13px; }
.tsearch { width: 218px; height: 30px; border-radius: 15px; background: #f3f7fd; display: flex; align-items: center; gap: 9px; padding-left: 10px; font-size: 13px; color: #555; border: 1px solid #ccd9ee; }
.eye { margin-left: auto; margin-right: 6px; }
.ti { margin-left: 20px; }
.tv { margin-left: 13px; }
.tv + .ti { margin-left: 19px; }
.ti-wrap { margin-left: 20px; position: relative; height: 24px; }
.dot { position: absolute; left: 9px; bottom: -5px; width: 5px; height: 3px; border-radius: 2px; background: #666; }
.ti-active { width: 38px; height: 40px; margin-left: 13px; border-radius: 4px; background: rgba(255,255,255,.6); display: flex; align-items: center; justify-content: center; position: relative; }
.bar { position: absolute; left: 12px; bottom: 1px; width: 14px; height: 3px; border-radius: 2px; background: #0a6fc9; }
.tray { margin-left: auto; display: flex; align-items: center; padding-right: 21px; color: #222; }
.wifi { margin-left: 19px; }
.vol { margin-left: 8px; }
.bat { margin-left: 8px; }
.clock { margin-left: 18px; display: flex; flex-direction: column; align-items: flex-end; line-height: 16px; font-size: 11.500px; }
.notif { margin-left: 7px; width: 15px; height: 15px; border-radius: 8px; background: #0078d4; color: #fff; font-weight: 400; font-size: 10px; text-align: center; line-height: 15px; }
```
